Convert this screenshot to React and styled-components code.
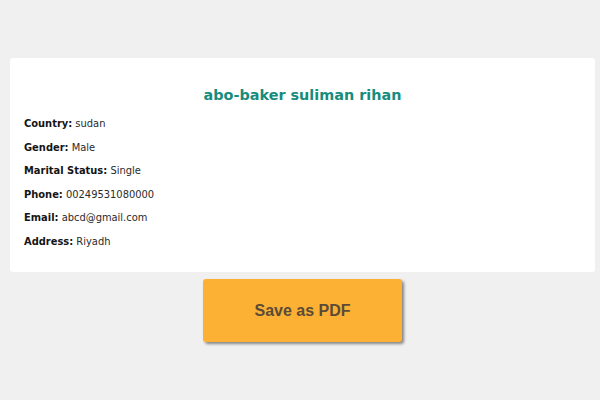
import React from "react";
import styled, { createGlobalStyle } from "styled-components";

const Global = createGlobalStyle`
  html, body { margin: 0; padding: 0; background: #f0f0f0; }
  body { font-family: "DejaVu Sans", Verdana, sans-serif; }
`;

const Page = styled.div`
  width: 600px;
  height: 400px;
  box-sizing: border-box;
  padding: 58px 5px 0 10px;
  display: flex;
  flex-direction: column;
  align-items: center;
`;

const Card = styled.section`
  align-self: stretch;
  height: 214px;
  box-sizing: border-box;
  background: #ffffff;
  border-radius: 3px;
  padding: 27px 14px 0 14px;
`;

const Title = styled.h2`
  margin: 0 0 13px 0;
  text-align: center;
  font-family: "DejaVu Sans", Verdana, sans-serif;
  font-weight: bold;
  font-size: 14.4px;
  line-height: 20px;
  color: #168c7d;
`;

const List = styled.div`
  display: flex;
  flex-direction: column;
  gap: 11px;
`;

const Row = styled.p`
  margin: 0;
  font-family: "DejaVu Sans Condensed", "DejaVu Sans", Verdana, sans-serif;
  font-size: 11px;
  line-height: 12.6px;
  color: #2a2a2a;
`;

const Label = styled.strong`
  font-weight: bold;
  color: #151515;
`;

const SaveButton = styled.button`
  margin-top: 7px;
  width: 199px;
  height: 63px;
  border: none;
  border-radius: 3px;
  background: #fcb135;
  box-shadow: 2px 2px 3px rgba(0, 0, 0, 0.45);
  font-family: "Liberation Sans", Arial, sans-serif;
  font-weight: bold;
  font-size: 16px;
  color: #5a4b37;
  cursor: pointer;
`;

const data = [
  ["Country", "sudan"],
  ["Gender", "Male"],
  ["Marital Status", "Single"],
  ["Phone", "00249531080000"],
  ["Email", "abcd@gmail.com"],
  ["Address", "Riyadh"],
];

export default function App() {
  return (
    <>
      <Global />
      <Page>
        <Card>
          <Title>abo-baker suliman rihan</Title>
          <List>
            {data.map(([k, v]) => (
              <Row key={k}>
                <Label>{k}:</Label> {v}
              </Row>
            ))}
          </List>
        </Card>
        <SaveButton>Save as PDF</SaveButton>
      </Page>
    </>
  );
}
